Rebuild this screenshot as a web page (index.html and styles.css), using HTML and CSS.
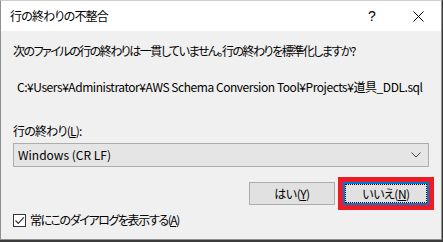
FILE: index.html
```html
<!DOCTYPE html>
<html lang="ja">

<head>
    <meta charset="UTF-8">
    <title>行の終わりの不整合</title>
    <link rel="stylesheet" href="styles.css">
</head>

<body>
    <div class="dialog">
        <!-- タイトルバー -->
        <div class="dialog-title">
            <span class="title-text">行の終わりの不整合</span>
            <span class="title-help">?</span>
            <span class="title-close">
                <svg width="11" height="11" viewBox="0 0 11 11">
                    <path d="M0.5 0.5 L10.5 10.5 M10.5 0.5 L0.5 10.5" stroke="#000" stroke-width="1" fill="none" />
                </svg>
            </span>
        </div>
        <!-- 本文 -->
        <div class="dialog-body">
            <p class="message">次のファイルの行の終わりは一貫していません。行の終わりを標準化しますか?</p>
            <p class="file-path">C:¥Users¥Administrator¥AWS Schema Conversion Tool¥Projects¥道具_DDL.sql</p>
            <label class="field-label">行の終わり(<u>L</u>):</label>
            <div class="combo">
                <span>Windows (CR LF)</span>
                <svg width="10" height="6" viewBox="0 0 10 6">
                    <path d="M0.5 0.5 L5 5 L9.5 0.5" stroke="#444" stroke-width="1" fill="none" />
                </svg>
            </div>
            <div class="button-row">
                <a href="javascript:;" class="btn">はい(<u>Y</u>)</a>
                <a href="javascript:;" class="btn btn-default">いいえ(<u>N</u>)</a>
            </div>
            <div class="check-row">
                <span class="check-box">
                    <svg width="11" height="11" viewBox="0 0 11 11">
                        <path d="M1.5 5.5 L4.3 8.3 L9.8 2.3" stroke="#333" stroke-width="1.2" fill="none" />
                    </svg>
                </span>
                <span class="check-text">常にこのダイアログを表示する(<u>A</u>)</span>
            </div>
        </div>
    </div>
</body>

</html>
```

FILE: styles.css
```css
body,
p,
div,
span,
label,
a {
    padding: 0px;
    margin: 0px;
}

body {
    background: #3c3c3c;
    font-family: "Noto Sans CJK JP", "Noto Sans", sans-serif;
    font-size: 12px;
    color: #000000;
    font-feature-settings: "palt";
}

a {
    text-decoration: none;
    color: #000000;
}

.dialog {
    width: 440px;
    height: 238px;
    overflow: hidden;
    border: 1px solid #8f8f8f;
    border-top-color: #cfcfcf;
    background: #f0f0f0;
}

.dialog-title {
    display: flex;
    align-items: center;
    height: 30px;
    background: #ffffff;
}

.title-text {
    flex: 1;
    padding-left: 9px;
    line-height: 16px;
    letter-spacing: -0.8px;
}

.title-help {
    width: 46px;
    text-align: center;
    font-family: "Liberation Sans", sans-serif;
    font-size: 14px;
    line-height: 16px;
}

.title-close {
    display: flex;
    justify-content: center;
    width: 46px;
}

.dialog-body {
    padding: 12px 12px 0px 12px;
}

.message {
    line-height: 16px;
    letter-spacing: -1.5px;
}

.file-path {
    margin-top: 20px;
    padding-left: 4px;
    line-height: 16px;
    white-space: nowrap;
    letter-spacing: -0.45px;
}

.field-label {
    display: block;
    margin-top: 28px;
    line-height: 16px;
    letter-spacing: -0.8px;
}

.combo {
    display: flex;
    align-items: center;
    justify-content: space-between;
    height: 22px;
    margin-top: 4px;
    padding: 0px 7px 0px 4px;
    border: 1px solid #adadad;
    background: #e5e5e5;
    line-height: 16px;
}

.button-row {
    display: flex;
    justify-content: flex-end;
    gap: 8px;
    margin-top: 15px;
}

.btn {
    display: flex;
    align-items: center;
    justify-content: center;
    width: 84px;
    height: 21px;
    border: 1px solid #adadad;
    background: #e1e1e1;
    line-height: 16px;
    letter-spacing: -0.5px;
}

.btn-default {
    position: relative;
    width: 82px;
    height: 19px;
    border: 2px solid #0078d7;
    outline: 5px solid #ed1c24;
}

/* フォーカスの点線 */
.btn-default::after {
    content: "";
    position: absolute;
    left: 0px;
    top: 0px;
    right: 0px;
    bottom: 0px;
    border: 1px dotted #000000;
}

.check-row {
    display: flex;
    align-items: center;
    gap: 4px;
    margin-top: 7px;
    line-height: 16px;
}

.check-text {
    letter-spacing: -1.4px;
}

.check-box {
    display: flex;
    align-items: center;
    justify-content: center;
    width: 11px;
    height: 11px;
    border: 1px solid #333333;
    background: #ffffff;
}
```
